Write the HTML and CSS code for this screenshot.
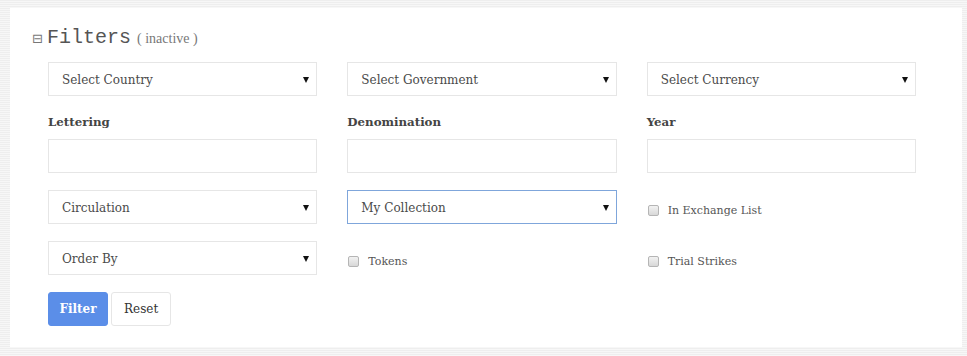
FILE: index.html
```html
<!DOCTYPE html>
<html lang="en">
<head>
    <meta charset="UTF-8">
    <title>Filters</title>
    <link rel="stylesheet" href="styles.css">
</head>
<body>
    <div class="panel">
        <div class="panel-title">
            <span class="toggle">&#8863;</span>
            <span class="title">Filters</span>
            <span class="state">( inactive )</span>
        </div>
        <form class="filters">
            <div class="field">
                <span class="select-wrap">
                    <select><option>Select Country</option></select>
                </span>
            </div>
            <div class="field">
                <span class="select-wrap">
                    <select><option>Select Government</option></select>
                </span>
            </div>
            <div class="field">
                <span class="select-wrap">
                    <select><option>Select Currency</option></select>
                </span>
            </div>

            <div class="field">
                <label class="label">Lettering</label>
                <input type="text" class="text-input">
            </div>
            <div class="field">
                <label class="label">Denomination</label>
                <input type="text" class="text-input">
            </div>
            <div class="field">
                <label class="label">Year</label>
                <input type="text" class="text-input">
            </div>

            <div class="field">
                <span class="select-wrap">
                    <select><option>Circulation</option></select>
                </span>
            </div>
            <div class="field">
                <span class="select-wrap focused">
                    <select><option>My Collection</option></select>
                </span>
            </div>
            <div class="field check">
                <label><input type="checkbox"> In Exchange List</label>
            </div>

            <div class="field">
                <span class="select-wrap">
                    <select><option>Order By</option></select>
                </span>
            </div>
            <div class="field check">
                <label><input type="checkbox"> Tokens</label>
            </div>
            <div class="field check">
                <label><input type="checkbox"> Trial Strikes</label>
            </div>

            <div class="actions">
                <button type="button" class="btn btn-primary">Filter</button>
                <button type="button" class="btn">Reset</button>
            </div>
        </form>
    </div>
</body>
</html>
```

FILE: styles.css
```css
body {
    margin: 0;
    padding: 8px 5px 9px 10px;
    background-color: #f3f3f3;
    background-image: repeating-linear-gradient(0deg, #f7f7f7 0, #f7f7f7 1px, #eeeeee 1px, #eeeeee 2px);
    font-family: "DejaVu Serif", "Liberation Serif", serif;
    color: #4a4a4a;
}
.panel {
    background-color: #ffffff;
    height: 339px;
    box-sizing: border-box;
    padding: 18px 46px 0 38px;
}
.panel-title {
    display: flex;
    align-items: baseline;
    margin-left: -15px;
    height: 36px;
}
.toggle {
    font-family: "DejaVu Sans", sans-serif;
    font-size: 13px;
    color: #777;
    width: 15px;
    margin-left: -1px;
}
.title {
    font-family: "Liberation Mono", monospace;
    font-size: 20px;
    color: #555;
}
.state {
    margin-left: 6px;
    font-family: "Liberation Serif", serif;
    font-size: 14px;
    color: #777;
}
.filters {
    display: grid;
    grid-template-columns: repeat(3, 1fr);
    column-gap: 30px;
    row-gap: 17px;
}
.field {
    display: flex;
    flex-direction: column;
}
.select-wrap {
    position: relative;
    display: block;
}
.select-wrap::after {
    content: "";
    position: absolute;
    right: 8px;
    top: 15px;
    border-left: 3.5px solid transparent;
    border-right: 3.5px solid transparent;
    border-top: 6px solid #111;
    pointer-events: none;
}
select,
.text-input {
    width: 100%;
    height: 34px;
    box-sizing: border-box;
    border: 1px solid #e6e6e6;
    background: #ffffff;
    padding: 2px 13px 0;
    font-family: "DejaVu Serif", serif;
    font-size: 12px;
    color: #4a4a4a;
    border-radius: 0;
    outline: none;
}
select {
    appearance: none;
    -webkit-appearance: none;
}
.focused select {
    border-color: #7fa6db;
}
.label {
    font-weight: bold;
    font-size: 11.8px;
    color: #444;
    margin: 2px 0 9px;
    line-height: 15px;
}
.check {
    justify-content: center;
    padding-top: 6px;
}
.check label {
    display: flex;
    align-items: center;
    font-size: 11px;
    color: #555;
}
.check input {
    appearance: none;
    -webkit-appearance: none;
    width: 11px;
    height: 11px;
    margin: 0 9px 0 1px;
    border: 1px solid #b5b5b5;
    border-radius: 2px;
    background: linear-gradient(#f2f2f2, #d8d8d8);
    box-sizing: border-box;
}
.actions {
    grid-column: 1 / -1;
    display: flex;
    gap: 3px;
}
.btn {
    height: 34px;
    padding: 0 12px;
    border: 1px solid #e6e6e6;
    background: #ffffff;
    border-radius: 3px;
    font-family: "DejaVu Serif", serif;
    font-size: 12px;
    color: #333;
    cursor: pointer;
}
.btn-primary {
    background-color: #5b8ee8;
    border-color: #5b8ee8;
    color: #ffffff;
    font-weight: bold;
    width: 60px;
    padding: 0;
}
```
